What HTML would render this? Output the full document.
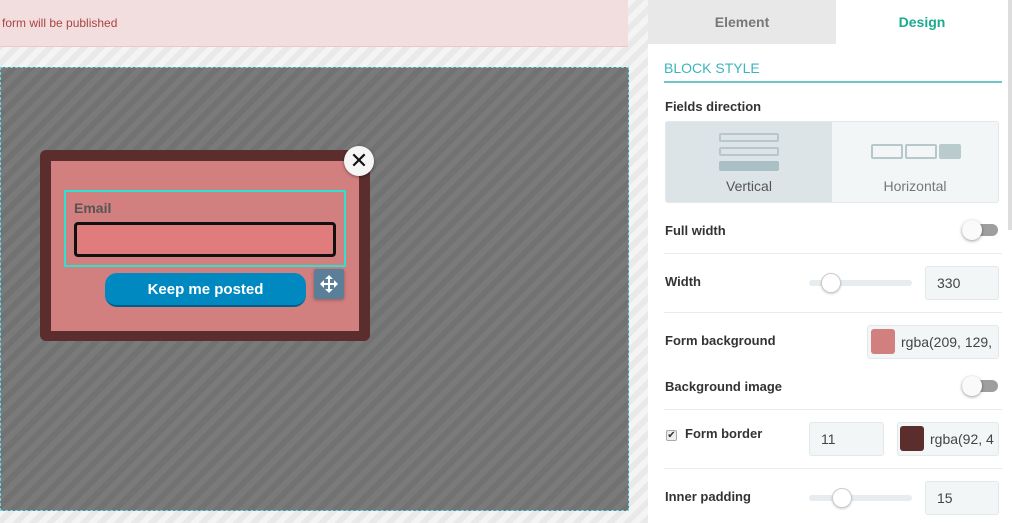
<!DOCTYPE html>
<html><head><style>
*{margin:0;padding:0;box-sizing:border-box}
body{width:1012px;height:523px;overflow:hidden;position:relative;font-family:"Liberation Sans",Arial,sans-serif;background:repeating-linear-gradient(135deg,#f4f4f4 0 6px,#e9e9e9 6px 12px)}
.a{position:absolute}
.lbl{position:absolute;left:665px;font-size:13px;font-weight:bold;color:#333}
.sep{position:absolute;left:664px;width:338px;height:1px;background:#e8ecee}
.inp{position:absolute;background:#f3f6f7;border:1px solid #e3e8ea;border-radius:3px;font-size:14px;color:#444}
.tog{position:absolute;width:36px;height:12px;border-radius:6px;background:#9e9e9e}
.tog::before{content:"";position:absolute;left:0;top:-4px;width:20px;height:20px;border-radius:50%;background:#fafafa;box-shadow:0 1px 3px rgba(0,0,0,.4)}
.sl{position:absolute;height:6px;width:103px;border-radius:3px;background:#e6ecef}
.th{position:absolute;top:-7px;width:20px;height:20px;border-radius:50%;background:#fff;border:1px solid #ccc;box-shadow:0 1px 2px rgba(0,0,0,.2)}
</style></head><body>
<div class="a" style="left:0;top:0;width:628px;height:47px;background:#f2dede;border-bottom:1px solid #e8c8c8"></div>
<div class="a" style="left:2px;top:16px;font-size:12px;color:#a94442">form will be published</div>
<div class="a" style="left:0;top:67px;width:629px;height:444px;border:1px dashed #66d9e8;background:repeating-linear-gradient(135deg,#7a7a7a 0 6px,#727272 6px 12px)"></div>
<div class="a" style="left:40px;top:150px;width:330px;height:191px;background:#5c2d2d;border-radius:6px"></div>
<div class="a" style="left:51px;top:161px;width:308px;height:170px;background:#d17f7f"></div>
<div class="a" style="left:344px;top:146px;width:30px;height:30px;border-radius:50%;background:#f5f5f5;box-shadow:0 1px 3px rgba(0,0,0,.4);text-align:center;line-height:29px;font-size:22px;color:#111">✕</div>
<div class="a" style="left:64px;top:190px;width:282px;height:77px;border:2px solid #2ee0d0"></div>
<div class="a" style="left:74px;top:200px;font-size:14px;font-weight:bold;color:#555">Email <span style="color:#e77;font-weight:normal">*</span></div>
<div class="a" style="left:74px;top:222px;width:262px;height:35px;background:#e07c7c;border:3px solid #111;border-radius:4px"></div>
<div class="a" style="left:105px;top:273px;width:201px;height:34px;background:#0089c1;border-radius:12px;border-bottom:2px solid #005f88;color:#fff;font-weight:bold;font-size:15px;text-align:center;line-height:33px">Keep me posted</div>
<div class="a" style="left:314px;top:269px;width:30px;height:30px;background:#5b7f99;border-radius:2px;box-shadow:0 1px 3px rgba(0,0,0,.3)"><svg width="30" height="30" viewBox="0 0 30 30"><path d="M15 6l4 4h-3v4h4v-3l4 4-4 4v-3h-4v4h3l-4 4-4-4h3v-4h-4v3l-4-4 4-4v3h4v-4h-3z" fill="#fff"/></svg></div>
<div class="a" style="left:648px;top:0;width:364px;height:523px;background:#fff"></div>
<div class="a" style="left:1008px;top:0;width:4px;height:230px;background:#ddd"></div>
<div class="a" style="left:648px;top:0;width:188px;height:44px;background:#e8e8e8;text-align:center;line-height:44px;font-weight:bold;font-size:14px;color:#777">Element</div>
<div class="a" style="left:836px;top:0;width:172px;height:44px;text-align:center;line-height:44px;font-weight:bold;font-size:14px;color:#1aab8e">Design</div>
<div class="a" style="left:664px;top:60px;font-size:14px;color:#3ab5c0">BLOCK STYLE</div>
<div class="a" style="left:664px;top:81px;width:338px;height:2px;background:#6cc8c8"></div>
<div class="lbl" style="top:99px">Fields direction</div>
<div class="a" style="left:665px;top:121px;width:334px;height:82px;border:1px solid #e3e8ea;border-radius:3px;background:#f3f6f7"></div>
<div class="a" style="left:666px;top:122px;width:166px;height:80px;background:#dde4e7"></div>
<div class="a" style="left:719px;top:133px;width:60px;height:9px;border:2px solid #b6c8cc;border-radius:2px"></div>
<div class="a" style="left:719px;top:147px;width:60px;height:9px;border:2px solid #b6c8cc;border-radius:2px"></div>
<div class="a" style="left:719px;top:161px;width:60px;height:10px;background:#abc0c4;border-radius:2px"></div>
<div class="a" style="left:666px;top:178px;width:166px;text-align:center;font-size:14px;color:#555">Vertical</div>
<div class="a" style="left:871px;top:144px;width:32px;height:15px;border:2px solid #b6c8cc;border-radius:2px"></div>
<div class="a" style="left:905px;top:144px;width:32px;height:15px;border:2px solid #b6c8cc;border-radius:2px"></div>
<div class="a" style="left:939px;top:144px;width:22px;height:15px;background:#bacbcf;border-radius:2px"></div>
<div class="a" style="left:832px;top:178px;width:166px;text-align:center;font-size:14px;color:#777">Horizontal</div>
<div class="lbl" style="top:223px">Full width</div>
<div class="tog" style="left:962px;top:224px"></div>
<div class="sep" style="top:253px"></div>
<div class="lbl" style="top:274px">Width</div>
<div class="sl" style="left:809px;top:280px"><div class="th" style="left:12px"></div></div>
<div class="inp" style="left:925px;top:266px;width:74px;height:34px;padding:8px 0 0 11px">330</div>
<div class="sep" style="top:312px"></div>
<div class="lbl" style="top:333px">Form background</div>
<div class="inp" style="left:867px;top:325px;width:132px;height:34px;padding:8px 0 0 33px;overflow:hidden;white-space:nowrap">rgba(209, 129,</div>
<div class="a" style="left:871px;top:329px;width:24px;height:25px;background:#d17f7f;border-radius:3px"></div>
<div class="lbl" style="top:379px">Background image</div>
<div class="tog" style="left:962px;top:380px"></div>
<div class="sep" style="top:409px"></div>
<div class="a" style="left:666px;top:430px;width:11px;height:11px;border:1px solid #aaa;border-radius:2px;background:#eee;font-size:10px;line-height:9px;text-align:center;color:#333">✔</div>
<div class="lbl" style="top:426px;left:685px">Form border</div>
<div class="inp" style="left:809px;top:422px;width:75px;height:34px;padding:8px 0 0 11px">11</div>
<div class="inp" style="left:897px;top:422px;width:102px;height:34px;padding:8px 0 0 32px;overflow:hidden;white-space:nowrap">rgba(92, 4</div>
<div class="a" style="left:900px;top:426px;width:24px;height:25px;background:#5c2d2d;border-radius:3px"></div>
<div class="sep" style="top:468px"></div>
<div class="lbl" style="top:489px">Inner padding</div>
<div class="sl" style="left:809px;top:495px"><div class="th" style="left:23px"></div></div>
<div class="inp" style="left:925px;top:481px;width:74px;height:34px;padding:8px 0 0 11px">15</div>
</body></html>
